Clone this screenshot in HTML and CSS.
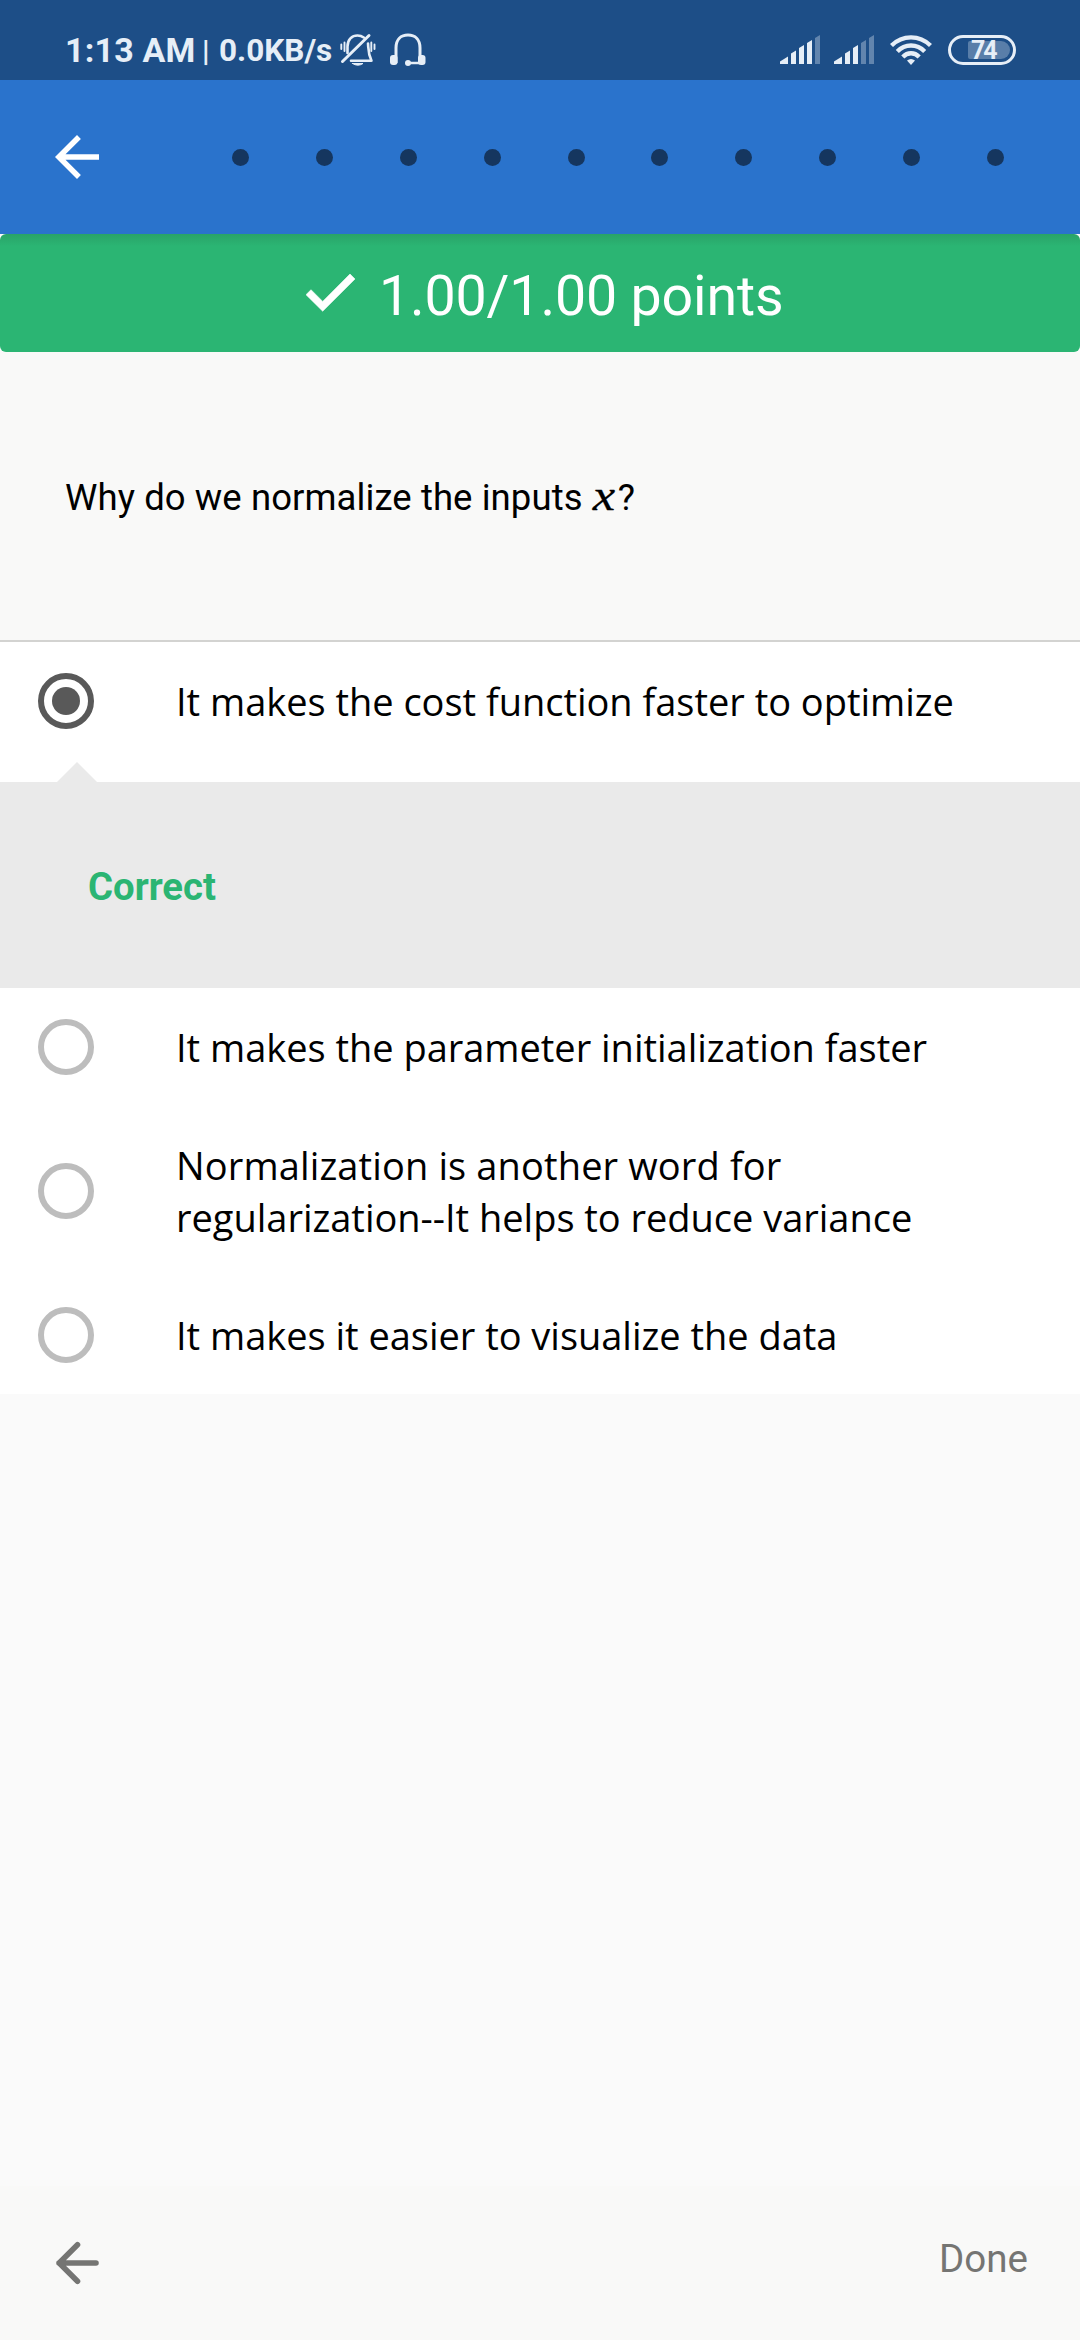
FILE: index.html
```html
<!DOCTYPE html>
<html lang="en">
<head>
<meta charset="utf-8">
<title>Quiz</title>
<link rel="stylesheet" href="styles.css">
</head>
<body>
<div class="screen">
  <header class="status">
    <span class="clock">1:13 AM</span>
    <span class="divider">|</span>
    <span class="speed">0.0KB/s</span>
    <svg class="bell" width="36" height="34" viewBox="0 0 36 34" fill="none" stroke="currentColor" stroke-width="2.6" stroke-linecap="round" stroke-linejoin="round">
      <path d="M7.5 20V13.5C7.5 6.500 12 2.500 17.500 2.500C20 2.500 22 3.200 23.800 4.500M28 10.500C28.500 15 27.800 20 31.500 27.700H11"/>
      <path d="M2.500 28.500L29 2.500" stroke-width="3"/>
      <path d="M4.500 9.500V18M1.300 11.500V16M31.300 9.500V18M34.500 11.500V16" stroke-width="1.900"/>
      <path d="M12.500 30.500H23Q17.800 34 12.500 30.500Z" fill="currentColor" stroke-width="1"/>
    </svg>
    <svg class="headset" width="36" height="34" viewBox="0 0 36 34" fill="none" stroke="currentColor" stroke-width="3">
      <path d="M6 30V15C6 6.500 11 2 18 2S30 6.500 30 15V30"/>
      <rect x="0" y="22" width="7.500" height="10" rx="3" fill="currentColor" stroke="none"/>
      <rect x="28" y="22" width="7.500" height="10" rx="3" fill="currentColor" stroke="none"/>
      <path d="M18 30H30" stroke-width="2.500"/>
      <circle cx="18" cy="30" r="3" fill="currentColor" stroke="none"/>
    </svg>
    <span class="grow"></span>
    <svg class="signal" width="40" height="30" viewBox="0 0 40 30" fill="currentColor">
      <path d="M0 29V26.500L8 21.500V29ZM11 29V18.500L16 15.500V29ZM19 29V13L24 10V29ZM27 29V8L32 5V29Z"/>
      <path opacity=".35" d="M35 29V3L40 0V29Z"/>
    </svg>
    <svg class="signal second" width="40" height="30" viewBox="0 0 40 30" fill="currentColor">
      <path d="M0 29V26.500L8 21.500V29ZM11 29V18.500L16 15.500V29ZM19 29V13L24 10V29Z"/>
      <path opacity=".35" d="M27 29V8L32 5V29ZM35 29V3L40 0V29Z"/>
    </svg>
    <svg class="wifi" width="42" height="30" viewBox="0 0 42 30" fill="none" stroke="currentColor" stroke-width="4.300">
      <path d="M1.500 10.500C12.500-.4 29.500-.4 40.500 10.500M7.300 16.500C15 8.500 27 8.500 34.700 16.500M12.800 22C17.500 17 24.500 17 29.200 22"/>
      <path d="M17 25.500Q21 22.500 25 25.500L21 30Z" fill="currentColor" stroke="none"/>
    </svg>
    <div class="battery"><span class="charge">74</span></div>
  </header>

  <nav class="appbar">
    <svg width="66" height="66" viewBox="0 0 24 24" fill="currentColor"><path d="M20 11H7.830l5.590-5.590L12 4l-8 8 8 8 1.410-1.410L7.830 13H20z"/></svg>
    <div class="dots"><i></i><i></i><i></i><i></i><i></i><i></i><i></i><i></i><i></i><i></i></div>
  </nav>

  <main class="content">
    <section class="score">
      <svg width="50" height="38" viewBox="0 0 50 38" fill="currentColor" stroke="currentColor" stroke-width=".6"><path d="M0 20.700L5 15.700L16.700 27.400L44 0L49 5L16.700 37.200Z"/></svg>
      <span class="points">1.00/1.00 points</span>
    </section>
    <section class="question"><p>Why do we normalize the inputs <em>x</em>?</p></section>
    <section class="options">
      <div class="option"><span class="radio checked"></span><p>It makes the cost function faster to optimize</p></div>
      <div class="feedback"><strong>Correct</strong></div>
      <div class="option"><span class="radio"></span><p>It makes the parameter initialization faster</p></div>
      <div class="option"><span class="radio"></span><p><span class="loose">Normalization is another word for</span><br>regularization--It helps to reduce variance</p></div>
      <div class="option"><span class="radio"></span><p>It makes it easier to visualize the data</p></div>
    </section>
  </main>

  <footer class="footer">
    <svg width="44" height="44" viewBox="0 0 44 44" fill="none" stroke="currentColor" stroke-width="5.600" stroke-linecap="round" stroke-linejoin="round"><path d="M40 22H3M21.500 3.800L3.200 22L21.500 40.200"/></svg>
    <span class="done">Done</span>
  </footer>
</div>
</body>
</html>
```
FILE: styles.css
```css
* { box-sizing: border-box; }
body { margin: 0; font-family: Roboto, sans-serif; color: #000; background: #fafafa; }
p { margin: 0; }
svg { display: block; flex: none; }
.screen { display: flex; flex-direction: column; width: 1080px; height: 2340px; }

.status { display: flex; align-items: center; height: 80px; padding: 20px 64px 0 65px; background: #1d4e87; color: #e6eef7; white-space: nowrap; }
.clock { width: 137px; font-size: 34px; font-weight: 700; letter-spacing: .2px; }
.divider { width: 17px; font-size: 30px; font-weight: 700; }
.speed { width: 121px; font-size: 31.500px; font-weight: 700; }
.headset { margin-left: 14px; }
.grow { flex: 1; }
.second { margin-left: 14px; }
.wifi { margin-left: 16px; }
.battery { width: 68px; height: 30px; margin-left: 16px; padding: 3px 3px 3px 17px; border: 3px solid; border-radius: 15px; }
.charge { display: block; width: 42px; height: 18px; padding-left: 3px; border-radius: 2px 9px 9px 2px; background: rgba(230, 238, 247, .3); font-size: 25px; font-weight: 700; line-height: 19px; letter-spacing: -2px; }

.appbar { display: flex; align-items: center; height: 154px; padding-left: 44px; background: #2a73cc; color: #fff; }
.dots { display: flex; gap: 66.900px; margin-left: 122px; }
.dots i { width: 17px; height: 17px; border-radius: 50%; background: #15365f; }

.content { flex: 1; }
.score { display: flex; align-items: center; height: 118px; padding-left: 306px; border-radius: 6px; background: linear-gradient(#29a368, #2bb573 12px); color: #fff; }
.points { margin: 6px 0 0 23px; font-size: 55.500px; letter-spacing: -.15px; }
.question { display: flex; align-items: center; height: 290px; padding: 3px 65px 0; border-bottom: 2px solid #d3d3d1; background: #f9f9f8; font-size: 36.500px; letter-spacing: .08px; }
.question em { display: inline-block; margin: 0 4px 0 2px; font-family: "Liberation Serif", serif; font-size: 45px; line-height: 36px; transform: scaleX(1.12); -webkit-text-stroke: .3px; }

.options { background: #fff; }
.option { display: flex; align-items: center; padding: 33px 0 33px 38px; font: 38px/52px "Open Sans", sans-serif; letter-spacing: -.02px; white-space: nowrap; }
.option p { margin-left: 82px; }
.loose { letter-spacing: .13px; }
.radio { display: flex; align-items: center; justify-content: center; width: 56px; height: 56px; margin: -2px 0; border: 6px solid #bdbdbd; border-radius: 50%; }
.checked { border-color: #595959; }
.checked::after { content: ""; width: 28px; height: 28px; border-radius: 50%; background: #595959; }
.feedback { position: relative; display: flex; align-items: center; height: 206px; margin-top: 22px; padding: 3px 0 0 88px; background: #eaeaea; color: #2bb573; font-size: 38.300px; }
.feedback::before { content: ""; position: absolute; left: 57px; bottom: 100%; border: 20px solid transparent; border-top: 0; border-bottom-color: #eaeaea; }

.footer { display: flex; align-items: center; justify-content: space-between; height: 154px; padding: 0 52px 0 56px; background: #f9f9f8; color: #757573; }
.done { margin-top: -9px; font-size: 38.500px; }
```
